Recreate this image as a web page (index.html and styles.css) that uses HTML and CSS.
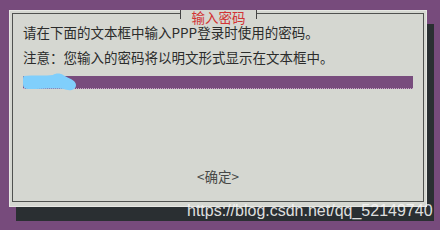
FILE: index.html
```html
<!DOCTYPE html>
<html lang="zh-CN">
  <head>
    <meta charset="UTF-8" />
    <meta name="viewport" content="width=device-width, initial-scale=1.0" />
    <title>输入密码</title>
    <link rel="stylesheet" href="styles.css">
  </head>
  <body>
    <div class="dialog">
      <div class="frame">
        <div class="title"><span>输入密码</span></div>
        <p class="line">请在下面的文本框中输入PPP登录时使用的密码。</p>
        <p class="line">注意：您输入的密码将以明文形式显示在文本框中。</p>
        <div class="field">
          <!-- redacted part of the password -->
          <svg class="smudge" width="56" height="18" viewBox="0 0 56 18">
            <path d="M2 3 C10 2 24 3 31 2 C33 0 39 0 41 2 C46 5 54 7 54 12 C54 18 46 18 42 16 C33 15 20 16 8 16 C2 16 1 15 1 10 C1 5 1 3 2 3 Z" fill="#80cffc" />
          </svg>
        </div>
        <div class="ok">&lt;确定&gt;</div>
      </div>
    </div>
    <div class="watermark">https://blog.csdn.net/qq_52149740</div>
  </body>
</html>
```

FILE: styles.css
```css
* {
  margin: 0;
  padding: 0;
  box-sizing: border-box;
}
body {
  width: 440px;
  height: 230px;
  background: #774b7c;
  font-family: "Noto Sans CJK SC", "Noto Sans", sans-serif;
  position: relative;
  overflow: hidden;
}
.dialog {
  margin: 10px 0 0 9px;
  width: 418px;
  height: 197px;
  padding: 2px;
  background: #d5d7d1;
  border: 1px solid #e6e7e3;
  box-shadow: 7px 14px 0 0 #2a2f32;
}
.frame {
  position: relative;
  height: 189px;
  border: 1px solid #505250;
  padding: 10px 10px 0 10px;
  display: flex;
  flex-direction: column;
}
.title {
  position: absolute;
  top: -4px;
  left: 167px;
  width: 77px;
  height: 9px;
  background: #d5d7d1;
  border-left: 1px solid #444;
  border-right: 1px solid #444;
}
.title span {
  display: block;
  text-align: center;
  font-size: 13.5px;
  line-height: 12px;
  padding-top: 1px;
  color: #d23434;
}
.line {
  font-size: 13.5px;
  line-height: 16px;
  color: #2b2c2b;
}
.line + .line {
  margin-top: 9px;
}
.field {
  position: relative;
  margin-top: 11px;
  height: 13px;
  background: #784c7d;
  border-bottom: 1px dotted #c7a9c6;
}
.smudge {
  position: absolute;
  left: -1px;
  top: -3px;
}
.ok {
  margin-top: auto;
  margin-bottom: 15px;
  text-align: center;
  font-size: 13.5px;
  line-height: 20px;
  color: #474847;
}
.watermark {
  position: absolute;
  left: 187px;
  top: 202px;
  font-family: "Liberation Sans", Arial, sans-serif;
  font-size: 16px;
  line-height: 18px;
  color: rgba(245, 245, 245, 0.9);
}
```
